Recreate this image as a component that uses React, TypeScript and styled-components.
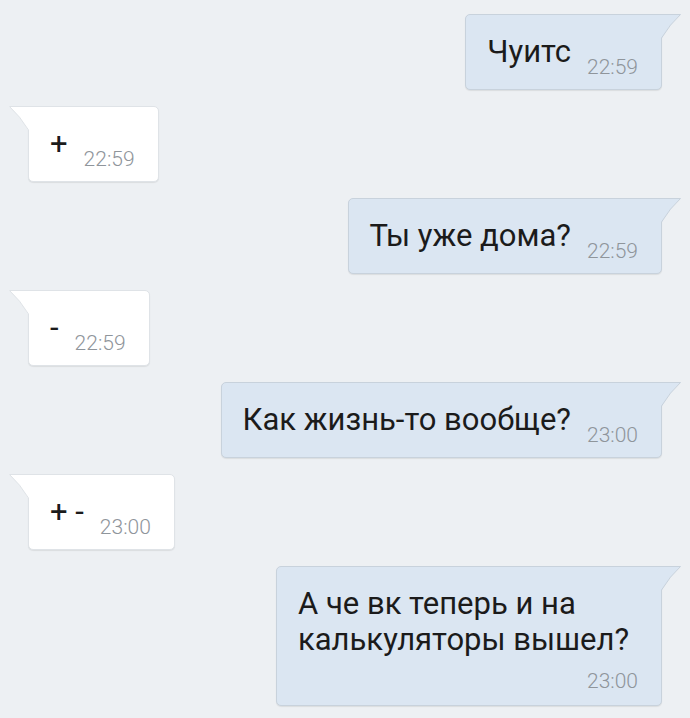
import styled, { createGlobalStyle } from "styled-components";

const GlobalStyle = createGlobalStyle`
  html, body {
    margin: 0;
    padding: 0;
    background: #edf0f3;
  }
  body {
    font-family: Roboto, "Noto Sans", "Liberation Sans", sans-serif;
  }
`;

const Page = styled.div`
  width: 690px;
  height: 718px;
  box-sizing: border-box;
  padding: 14px 28px 0 28px;
  display: flex;
  flex-direction: column;
  gap: 16px;
  background: #edf0f3;
  overflow: hidden;
`;

const Row = styled.div<{ $out: boolean }>`
  display: flex;
  justify-content: ${({ $out }) => ($out ? "flex-end" : "flex-start")};
`;

const Bubble = styled.div<{ $out: boolean; $stacked?: boolean }>`
  position: relative;
  display: flex;
  flex-direction: ${({ $stacked }) => ($stacked ? "column" : "row")};
  align-items: flex-end;
  gap: ${({ $stacked }) => ($stacked ? "0" : "16px")};
  padding: 19px 23px ${({ $stacked }) => ($stacked ? "14px" : "12px")} 21px;
  background: ${({ $out }) => ($out ? "#dbe6f2" : "#ffffff")};
  border: 1px solid ${({ $out }) => ($out ? "#c8d2dc" : "#dfe3e7")};
  border-radius: ${({ $out }) => ($out ? "5px 0 5px 5px" : "0 5px 5px 5px")};
  box-shadow: 0 1px 1px rgba(0, 0, 0, 0.08);
`;

const Text = styled.div<{ $stacked?: boolean }>`
  font-size: 31px;
  line-height: 36px;
  color: #1b1b1b;
  margin-bottom: 7px;
  max-width: 340px;
  align-self: ${({ $stacked }) => ($stacked ? "flex-start" : "auto")};
`;

const Time = styled.span<{ $stacked?: boolean }>`
  font-size: 21px;
  line-height: 20px;
  font-weight: 300;
  color: #8f959b;
  margin-top: ${({ $stacked }) => ($stacked ? "6px" : "0")};
`;

const TailSvg = styled.svg<{ $out: boolean }>`
  position: absolute;
  top: -1px;
  ${({ $out }) => ($out ? "right: -21px;" : "left: -21px;")}
  width: 22px;
  height: 24px;
  overflow: visible;
`;

const Tail = ({ out }: { out: boolean }) => {
  const fill = out ? "#dbe6f2" : "#ffffff";
  const stroke = out ? "#c8d2dc" : "#dfe3e7";
  return (
    <TailSvg $out={out} viewBox="0 0 22 24">
      <g transform={out ? undefined : "translate(22 0) scale(-1 1)"}>
        <path d="M0 0 H21 Q10 10 2 24 H0 Z" fill={fill} />
        <path d="M0 0.5 H20.5 Q10 10 1.5 24" fill="none" stroke={stroke} strokeWidth="1" />
      </g>
    </TailSvg>
  );
};

interface IMessage {
  out: boolean;
  text: string;
  time: string;
  stacked?: boolean;
}

const messages: IMessage[] = [
  { out: true, text: "Чуитс", time: "22:59" },
  { out: false, text: "+", time: "22:59" },
  { out: true, text: "Ты уже дома?", time: "22:59" },
  { out: false, text: "-", time: "22:59" },
  { out: true, text: "Как жизнь-то вообще?", time: "23:00" },
  { out: false, text: "+ -", time: "23:00" },
  {
    out: true,
    text: "А че вк теперь и на калькуляторы вышел?",
    time: "23:00",
    stacked: true,
  },
];

export default function App() {
  return (
    <>
      <GlobalStyle />
      <Page>
        {messages.map((m, i) => (
          <Row key={i} $out={m.out}>
            <Bubble $out={m.out} $stacked={m.stacked}>
              <Tail out={m.out} />
              <Text $stacked={m.stacked}>{m.text}</Text>
              <Time $stacked={m.stacked}>{m.time}</Time>
            </Bubble>
          </Row>
        ))}
      </Page>
    </>
  );
}
